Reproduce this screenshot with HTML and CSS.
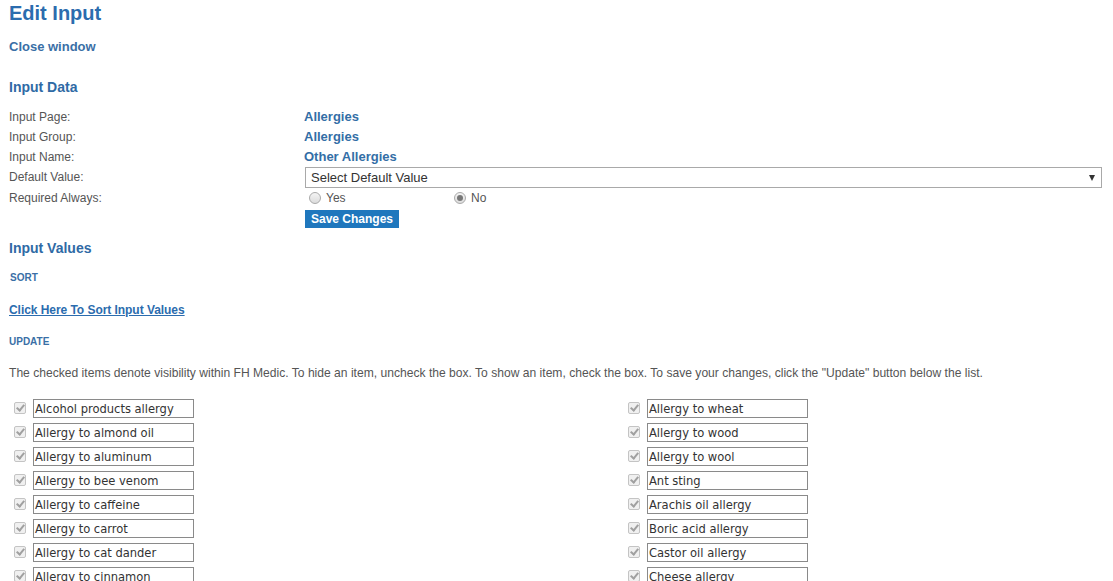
FILE: index.html
```html
<!DOCTYPE html>
<html>
<head>
<meta charset="utf-8">
<title>Edit Input</title>
<link rel="stylesheet" href="styles.css">
</head>
<body>
<div class="page">
  <h1 class="title">Edit Input</h1>
  <a class="close" href="#">Close window</a>
  <h2 class="section">Input Data</h2>
  <div class="data">
    <div class="label">Input Page:</div><div class="value">Allergies</div>
    <div class="label">Input Group:</div><div class="value">Allergies</div>
    <div class="label">Input Name:</div><div class="value">Other Allergies</div>
    <div class="label">Default Value:</div>
    <div class="cell"><div class="select"><span>Select Default Value</span><span class="arrow"></span></div></div>
    <div class="label">Required Always:</div>
    <div class="cell radios">
      <span class="radio-opt"><span class="radio"></span>Yes</span>
      <span class="radio-opt"><span class="radio checked"></span>No</span>
    </div>
    <div class="label"></div>
    <div class="cell"><span class="btn">Save Changes</span></div>
  </div>
  <h2 class="section values-h">Input Values</h2>
  <div class="small-h sort-h">SORT</div>
  <a class="sort-link" href="#">Click Here To Sort Input Values</a>
  <div class="small-h update-h">UPDATE</div>
  <p class="note">The checked items denote visibility within FH Medic. To hide an item, uncheck the box. To show an item, check the box. To save your changes, click the "Update" button below the list.</p>
  <div class="list">
    <div class="item"><span class="cb"></span><span class="field">Alcohol products allergy</span></div>
    <div class="item"><span class="cb"></span><span class="field">Allergy to wheat</span></div>
    <div class="item"><span class="cb"></span><span class="field">Allergy to almond oil</span></div>
    <div class="item"><span class="cb"></span><span class="field">Allergy to wood</span></div>
    <div class="item"><span class="cb"></span><span class="field">Allergy to aluminum</span></div>
    <div class="item"><span class="cb"></span><span class="field">Allergy to wool</span></div>
    <div class="item"><span class="cb"></span><span class="field">Allergy to bee venom</span></div>
    <div class="item"><span class="cb"></span><span class="field">Ant sting</span></div>
    <div class="item"><span class="cb"></span><span class="field">Allergy to caffeine</span></div>
    <div class="item"><span class="cb"></span><span class="field">Arachis oil allergy</span></div>
    <div class="item"><span class="cb"></span><span class="field">Allergy to carrot</span></div>
    <div class="item"><span class="cb"></span><span class="field">Boric acid allergy</span></div>
    <div class="item"><span class="cb"></span><span class="field">Allergy to cat dander</span></div>
    <div class="item"><span class="cb"></span><span class="field">Castor oil allergy</span></div>
    <div class="item"><span class="cb"></span><span class="field">Allergy to cinnamon</span></div>
    <div class="item"><span class="cb"></span><span class="field">Cheese allergy</span></div>
  </div>
</div>
</body>
</html>
```
FILE: styles.css
```css
html, body { margin: 0; padding: 0; background: #fff; }
body { font-family: "Liberation Sans", Arial, sans-serif; color: #555; }
.page { padding: 0 12px 0 9px; }
.title { margin: 0; font-size: 20px; line-height: 26px; font-weight: bold; color: #2b6cae; }
.close { display: block; margin-top: 13px; font-size: 13px; line-height: 16px; font-weight: bold; color: #3a6fa6; text-decoration: none; }
.section { margin: 23px 0 0; font-size: 14px; line-height: 18px; font-weight: bold; color: #2f6aa5; }
.data { margin-top: 11px; display: grid; grid-template-columns: 295px 1fr; grid-template-rows: 20px 20px 20px 21px 20px 20px; }
.label { font-size: 12px; line-height: 20px; color: #555; }
.value { font-size: 13px; line-height: 20px; font-weight: bold; color: #336ea6; }
.cell { display: flex; align-items: center; }
.select { box-sizing: border-box; width: 797px; height: 21px; margin-left: 1px; border: 1px solid #a9a9a9; display: flex; align-items: center; justify-content: space-between; padding: 0 6px 0 5px; font-size: 13px; color: #333; background: #fff; }
.arrow { width: 0; height: 0; border-left: 3.5px solid transparent; border-right: 3.5px solid transparent; border-top: 6px solid #333; }
.radios { font-size: 12px; color: #555; }
.radio-opt { display: inline-flex; align-items: center; width: 145px; }
.radio { box-sizing: border-box; width: 12px; height: 12px; margin: 0 5px 0 5px; border-radius: 50%; border: 1px solid #aaa; background: linear-gradient(#f4f4f4, #dcdcdc); position: relative; }
.radio.checked::after { content: ""; position: absolute; left: 2px; top: 2px; width: 6px; height: 6px; border-radius: 50%; background: #777; }
.btn { display: inline-block; margin: 2px 0 0 1px; height: 18px; line-height: 18px; padding: 0 6px; background: #1f77bd; color: #fff; font-size: 12px; font-weight: bold; }
.values-h { margin-top: 11px; }
.small-h { font-size: 10px; line-height: 12px; font-weight: bold; color: #3a6fa6; }
.sort-h { margin-top: 15px; padding-left: 1px; }
.sort-link { display: block; margin-top: 18px; font-size: 12px; line-height: 16px; font-weight: bold; color: #2b6cae; text-decoration: underline; letter-spacing: -0.05px; }
.update-h { margin-top: 18px; }
.note { margin: 17px 0 0; font-size: 12.1px; line-height: 16px; color: #555; }
.list { margin-top: 15px; display: grid; grid-template-columns: 614px 1fr; grid-auto-rows: 24px; }
.item { display: flex; align-items: center; }
.cb { box-sizing: border-box; width: 12px; height: 12px; margin: 0 7px 0 5px; border: 1px solid #c4c4c4; border-radius: 2px; background: #f0f0f0; position: relative; }
.cb::after { content: ""; position: absolute; left: 3px; top: 0px; width: 3px; height: 6px; border: solid #a0a0a0; border-width: 0 2px 2px 0; transform: rotate(40deg); }
.field { box-sizing: border-box; width: 161px; height: 19px; border: 1px solid #8a8a8a; padding: 0 1px; font-family: "DejaVu Sans Condensed", "DejaVu Sans", sans-serif; font-size: 12.8px; line-height: 17px; color: #333; white-space: nowrap; overflow: hidden; }
```
